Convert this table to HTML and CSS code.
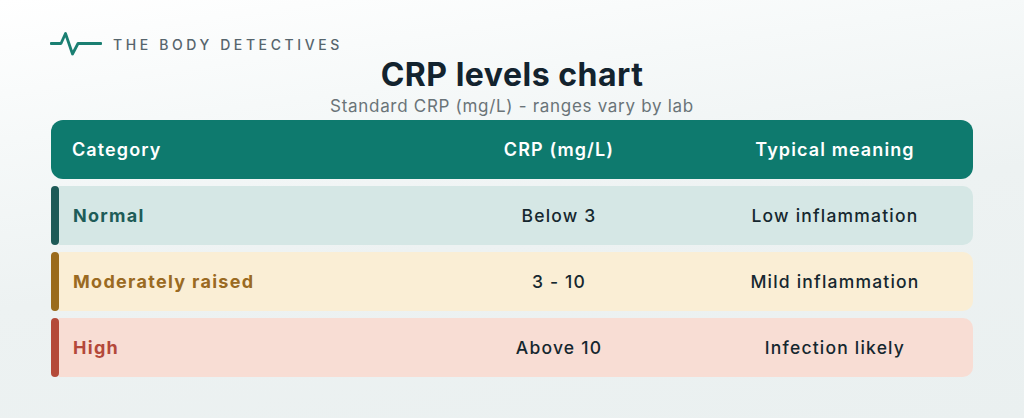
FILE: index.html
```html
<!DOCTYPE html>
<html lang="en">
<head>
<meta charset="utf-8">
<title>CRP levels chart</title>
<link rel="stylesheet" href="styles.css">
</head>
<body>
<div class="page">
  <div class="brand">
    <svg class="pulse" width="52" height="26" viewBox="0 0 52 26" aria-hidden="true">
      <path d="M1 12.5 H11 L15.5 2.5 L22.5 23 L28 12.5 H51" fill="none" stroke="#1a7f72" stroke-width="2.8" stroke-linecap="round" stroke-linejoin="round"/>
    </svg>
    <span class="brand-name">THE BODY DETECTIVES</span>
  </div>
  <h1 class="title">CRP levels chart</h1>
  <p class="subtitle">Standard CRP (mg/L) - ranges vary by lab</p>
  <div class="table">
    <div class="head">
      <div class="cell first">Category</div>
      <div class="cell">CRP (mg/L)</div>
      <div class="cell">Typical meaning</div>
    </div>
    <div class="row normal">
      <div class="bar"></div>
      <div class="cells">
        <div class="cell first cat">Normal</div>
        <div class="cell">Below 3</div>
        <div class="cell">Low inflammation</div>
      </div>
    </div>
    <div class="row moderate">
      <div class="bar"></div>
      <div class="cells">
        <div class="cell first cat">Moderately raised</div>
        <div class="cell">3 - 10</div>
        <div class="cell">Mild inflammation</div>
      </div>
    </div>
    <div class="row high">
      <div class="bar"></div>
      <div class="cells">
        <div class="cell first cat">High</div>
        <div class="cell">Above 10</div>
        <div class="cell">Infection likely</div>
      </div>
    </div>
  </div>
</div>
</body>
</html>
```

FILE: styles.css
```css
html, body {
  margin: 0;
  padding: 0;
}
body {
  width: 1024px;
  height: 418px;
  overflow: hidden;
  font-family: "Inter", "Noto Sans", sans-serif;
  background: linear-gradient(172deg, #ffffff 0%, #f6f9f9 25%, #edf2f2 55%, #eaf0f0 100%);
  color: #15272f;
}
.page {
  padding: 31px 51px 0 51px;
}
.brand {
  display: flex;
  align-items: center;
  gap: 11px;
  height: 26px;
}
.pulse {
  display: block;
  margin-left: -1px;
}
.brand-name {
  font-size: 14px;
  font-weight: 500;
  letter-spacing: 3.6px;
  color: #56656d;
}
.title {
  margin: 0;
  text-align: center;
  font-size: 32px;
  line-height: 36px;
  font-weight: 700;
  color: #13232e;
  letter-spacing: 0.5px;
}
.subtitle {
  margin: 3px 0 0 0;
  text-align: center;
  font-size: 17px;
  line-height: 20px;
  letter-spacing: 0.7px;
  color: #6a7478;
}
.table {
  margin-top: 4px;
  display: flex;
  flex-direction: column;
  gap: 7px;
}
.head {
  display: grid;
  grid-template-columns: 1fr 276px 276px;
  align-items: center;
  height: 59px;
  background: #0e7a6e;
  border-radius: 12px;
  color: #ffffff;
  font-weight: 600;
  font-size: 18px;
  letter-spacing: 1.1px;
}
.head .first {
  padding-left: 21px;
}
.cell {
  text-align: center;
}
.cell.first {
  text-align: left;
}
.row {
  display: flex;
  height: 59px;
}
.bar {
  width: 8px;
  border-radius: 4px;
  flex: none;
}
.cells {
  flex: 1;
  display: grid;
  grid-template-columns: 1fr 276px 276px;
  align-items: center;
  border-radius: 0 10px 10px 0;
  font-size: 17.5px;
  font-weight: 500;
  letter-spacing: 1.2px;
  color: #15272f;
}
.cells .first {
  padding-left: 14px;
}
.cat {
  font-weight: 700;
  font-size: 18px;
  letter-spacing: 1.3px;
}
.normal .bar { background: #1d5a57; }
.normal .cells { background: #d5e7e5; }
.normal .cat { color: #1e5c58; }
.moderate .bar { background: #9a6b1c; }
.moderate .cells { background: #faeed5; }
.moderate .cat { color: #9a6a22; }
.high .bar { background: #b44a39; }
.high .cells { background: #f8ddd4; }
.high .cat { color: #b4483a; }
```
